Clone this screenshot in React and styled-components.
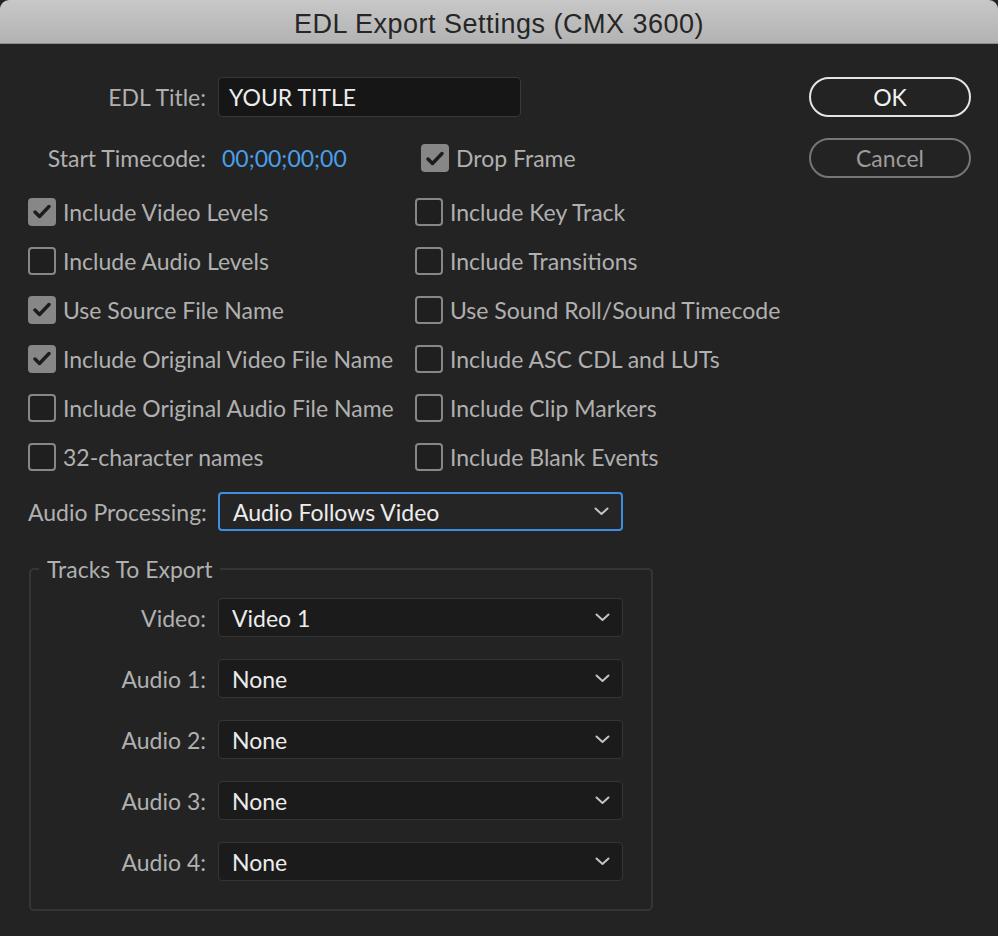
import React from 'react';
import styled, { createGlobalStyle } from 'styled-components';

const GlobalStyle = createGlobalStyle`
  html, body {
    margin: 0;
    padding: 0;
    background: #232323;
  }
  body {
    font-family: Lato, "Noto Sans", sans-serif;
  }
`;

const Window = styled.div`
  width: 998px;
  min-height: 936px;
  background: #232323;
  display: flex;
  flex-direction: column;
`;

const TitleBar = styled.div`
  height: 44px;
  box-sizing: border-box;
  padding-top: 5px;
  display: flex;
  align-items: center;
  justify-content: center;
  background: linear-gradient(#c8c8c8, #b2b2b2);
  border-bottom: 1px solid #8c8c8c;
  border-radius: 9px 9px 0 0;
  font-family: "Liberation Sans", Arial, sans-serif;
  font-size: 27px;
  letter-spacing: 0.5px;
  color: #262626;
`;

const Content = styled.div`
  display: flex;
  padding: 33px 27px 0 28px;
`;

const Main = styled.div`
  display: flex;
  flex-direction: column;
  width: 626px;
`;

const Buttons = styled.div`
  margin-left: auto;
  display: flex;
  flex-direction: column;
  gap: 21px;
  width: 162px;
`;

const Button = styled.button`
  height: 40px;
  box-sizing: border-box;
  border-radius: 20px;
  background: transparent;
  font-family: Lato, "Noto Sans", sans-serif;
  font-size: 23px;
  border: 2px solid ${p => (p.$primary ? '#e4e4e4' : '#767676')};
  color: ${p => (p.$primary ? '#f2f2f2' : '#9c9c9c')};
`;

const FieldRow = styled.div`
  display: flex;
  align-items: center;
  gap: 12px;
  height: ${p => p.$h || 40}px;
  margin-top: ${p => p.$mt || 0}px;
`;

const Label = styled.div`
  width: ${p => p.$w || 178}px;
  text-align: right;
  font-size: 23px;
  color: #b0b0b0;
  white-space: nowrap;
`;

const TextInput = styled.div`
  width: 303px;
  height: 40px;
  box-sizing: border-box;
  display: flex;
  align-items: center;
  padding-left: 10px;
  background: #161616;
  border: 1px solid #383838;
  border-radius: 4px;
  font-size: 23px;
  color: #ececec;
`;

const Timecode = styled.span`
  width: 191px;
  box-sizing: border-box;
  padding-left: 4px;
  font-size: 23px;
  color: #4a9fe8;
`;

const CheckGrid = styled.div`
  display: grid;
  grid-template-columns: 387px auto;
  grid-auto-rows: 49px;
  margin-top: 9px;
`;

const CheckItem = styled.label`
  display: flex;
  align-items: center;
  gap: 7px;
  font-size: 23px;
  color: #b0b0b0;
  white-space: nowrap;
`;

const Box = styled.span`
  width: 28px;
  height: 28px;
  box-sizing: border-box;
  border-radius: 4px;
  flex: none;
  display: flex;
  align-items: center;
  justify-content: center;
  border: 2.5px solid #878787;
  background: ${p => (p.$checked ? '#878787' : '#1f1f1f')};
`;

const Select = styled.div`
  width: 405px;
  height: 39px;
  box-sizing: border-box;
  display: flex;
  align-items: center;
  justify-content: space-between;
  padding: 0 12px 0 13px;
  border-radius: 4px;
  font-size: 23px;
  color: #ececec;
  background: ${p => (p.$focused ? '#252525' : '#1b1b1b')};
  border: ${p => (p.$focused ? '2px solid #3f8ee6' : '1px solid #353535')};
`;

const Group = styled.fieldset`
  margin: 24px 0 0 1px;
  width: 624px;
  box-sizing: border-box;
  padding: 15px 28px 28px 0;
  border: 2px solid #353535;
  border-radius: 5px;
  display: flex;
  flex-direction: column;
  gap: 22px;
`;

const Legend = styled.legend`
  margin-left: 8px;
  padding: 0 8px;
  line-height: 28px;
  font-size: 23px;
  color: #b0b0b0;
`;

const Check = ({ checked, children }) => (
  <CheckItem>
    <Box $checked={checked}>
      {checked && (
        <svg width="18" height="15" viewBox="0 0 18 15">
          <path d="M2 8 L6.5 12.5 L16 2.5" fill="none" stroke="#1c1c1c" strokeWidth="3.4" strokeLinecap="round" strokeLinejoin="round" />
        </svg>
      )}
    </Box>
    {children}
  </CheckItem>
);

const Dropdown = ({ value, focused }) => (
  <Select $focused={focused}>
    <span>{value}</span>
    <svg width="15" height="9" viewBox="0 0 15 9">
      <path d="M1.5 1.5 L7.5 7 L13.5 1.5" fill="none" stroke="#c4c4c4" strokeWidth="2" strokeLinecap="round" strokeLinejoin="round" />
    </svg>
  </Select>
);

const options = [
  ['Include Video Levels', true],
  ['Include Key Track', false],
  ['Include Audio Levels', false],
  ['Include Transitions', false],
  ['Use Source File Name', true],
  ['Use Sound Roll/Sound Timecode', false],
  ['Include Original Video File Name', true],
  ['Include ASC CDL and LUTs', false],
  ['Include Original Audio File Name', false],
  ['Include Clip Markers', false],
  ['32-character names', false],
  ['Include Blank Events', false],
];

const tracks = [
  ['Video:', 'Video 1'],
  ['Audio 1:', 'None'],
  ['Audio 2:', 'None'],
  ['Audio 3:', 'None'],
  ['Audio 4:', 'None'],
];

export default function App() {
  return (
    <Window>
      <GlobalStyle />
      <TitleBar>EDL Export Settings (CMX 3600)</TitleBar>
      <Content>
        <Main>
          <FieldRow>
            <Label>EDL Title:</Label>
            <TextInput>YOUR TITLE</TextInput>
          </FieldRow>
          <FieldRow $mt={21}>
            <Label>Start Timecode:</Label>
            <Timecode>00;00;00;00</Timecode>
            <Check checked>Drop Frame</Check>
          </FieldRow>
          <CheckGrid>
            {options.map(([text, checked]) => (
              <Check key={text} checked={checked}>{text}</Check>
            ))}
          </CheckGrid>
          <FieldRow $h={39} $mt={11}>
            <Label>Audio Processing:</Label>
            <Dropdown value="Audio Follows Video" focused />
          </FieldRow>
          <Group>
            <Legend>Tracks To Export</Legend>
            {tracks.map(([label, value]) => (
              <FieldRow key={label} $h={39}>
                <Label $w={175}>{label}</Label>
                <Dropdown value={value} />
              </FieldRow>
            ))}
          </Group>
        </Main>
        <Buttons>
          <Button $primary>OK</Button>
          <Button>Cancel</Button>
        </Buttons>
      </Content>
    </Window>
  );
}
